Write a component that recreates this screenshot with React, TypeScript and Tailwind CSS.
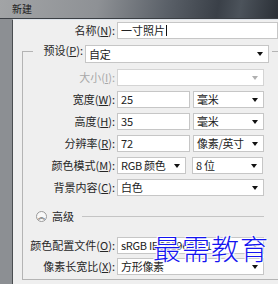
import type { ReactNode } from 'react';

const FONT = "font-['Noto_Sans_CJK_SC','Noto_Sans',sans-serif]";
const BOX = 'h-[17px] bg-white border border-[#c6c6c6] flex items-center text-[11px] text-[#222] leading-none';

function Arrow({ gray }: { gray?: boolean }) {
  return (
    <svg width="6" height="4" viewBox="0 0 6 4" className="shrink-0">
      <polygon points="0,0 6,0 3,4" fill={gray ? '#b0b0b0' : '#111'} />
    </svg>
  );
}

function Select({ value, w, disabled }: { value?: string; w: string; disabled?: boolean }) {
  return (
    <div className={`${BOX} ${w} pl-[3px] pr-[5px] justify-between gap-[2px] ${disabled ? 'bg-[#f3f3f3] border-[#d4d4d4]' : ''}`}>
      <span className="whitespace-nowrap tracking-[-0.3px]">{value}</span>
      <Arrow gray={disabled} />
    </div>
  );
}

function Field({ value, w }: { value: string; w: string }) {
  return <div className={`${BOX} ${w} pl-[3px]`}>{value}</div>;
}

function Label({ text, k, w = 'w-[92px]', dim }: { text: string; k: string; w?: string; dim?: boolean }) {
  return (
    <span className={`${w} shrink-0 text-right text-[11px] leading-none whitespace-nowrap ${dim ? 'text-[#a8a8a8]' : 'text-[#262626]'}`}>
      {text}(<span className="underline underline-offset-1">{k}</span>):
    </span>
  );
}

function Row({ children, mt = 'mt-[5px]' }: { children: ReactNode; mt?: string }) {
  return <div className={`flex items-center gap-[2px] h-[17px] ${mt}`}>{children}</div>;
}

export default function App() {
  return (
    <div className={`${FONT} relative w-[278px] h-[284px] overflow-hidden bg-[#8c8f93]`}>
      {/* title bar */}
      <div className="h-[19px] flex items-center pl-[12px] bg-[linear-gradient(100deg,#a2a4a6_0%,#8e9195_35%,#5a6068_60%,#3a4048_78%,#4c535b_86%,#2a2f36_100%)] border-b border-[#3b3f44]">
        <span className="text-[10px] text-[#1c1c1c] leading-none">新建</span>
      </div>

      {/* body */}
      <div className="ml-[12px] h-[265px] border-l border-[#4a4d50] bg-[#efefef] border-t border-t-[#dfe5ec]">
        <Row mt="mt-[2px]">
          <Label text="名称" k="N" w="w-[102px]" />
          <div className={`${BOX} w-[170px] pl-[3px] border-[#86acd8]`}>
            一寸照片<span className="inline-block w-px h-[11px] bg-[#111] ml-px" />
          </div>
        </Row>

        {/* preset row sits on the group border */}
        <div className="flex items-start gap-[2px] h-[18px] mt-[6px] ml-[9px]">
          <div className="w-[11px] mt-[6px] border-t border-[#b4b4b4]" />
          <Label text="预设" k="P" w="w-[48px]" />
          <Select value="自定" w="w-[184px] h-[18px]" />
          <div className="flex-1 ml-[1px] mt-[6px] border-t border-[#b4b4b4]" />
        </div>

        <div className="ml-[9px] -mt-[12px] pt-[12px] border-l border-b border-[#b4b4b4] pb-[4px]">
          <Row mt="mt-[6px]">
            <Label text="大小" k="I" dim />
            <Select w="w-[147px]" disabled />
          </Row>
          <Row>
            <Label text="宽度" k="W" />
            <Field value="25" w="w-[73px]" />
            <Select value="毫米" w="w-[71px] ml-[1px]" />
          </Row>
          <Row>
            <Label text="高度" k="H" />
            <Field value="35" w="w-[73px]" />
            <Select value="毫米" w="w-[71px] ml-[1px]" />
          </Row>
          <Row>
            <Label text="分辨率" k="R" />
            <Field value="72" w="w-[73px]" />
            <Select value="像素/英寸" w="w-[71px] ml-[1px]" />
          </Row>
          <Row>
            <Label text="颜色模式" k="M" />
            <Select value="RGB 颜色" w="w-[69px]" />
            <Select value="8 位" w="w-[71px] ml-[4px]" />
          </Row>
          <Row>
            <Label text="背景内容" k="C" />
            <Select value="白色" w="w-[147px]" />
          </Row>

          <div className="flex items-center h-[12px] mt-[14px] pl-[13px]">
            <span className="w-[11px] h-[11px] rounded-full border border-[#9a9a9a] bg-[#f8f8f8] flex items-center justify-center text-[7px] text-[#444] leading-none">︽</span>
            <span className="ml-[5px] text-[11px] text-[#262626] leading-none">高级</span>
            <div className="ml-[8px] w-[182px] border-t border-[#c4c4c4]" />
          </div>

          <Row mt="mt-[15px]">
            <Label text="颜色配置文件" k="O" />
            <Select value="sRGB IEC61966-2.1" w="w-[147px]" />
          </Row>
          <Row mt="mt-[4px]">
            <Label text="像素长宽比" k="X" />
            <Select value="方形像素" w="w-[147px]" />
          </Row>
        </div>
      </div>

      {/* watermark */}
      <div className="absolute left-[153px] top-[234px] text-[28px] leading-none tracking-[1px] text-[#1414f0] font-light [text-shadow:0_0_2px_#fff,0_0_2px_#fff,1px_1px_1px_#fff,-1px_-1px_1px_#fff]">
        最需教育
      </div>
    </div>
  );
}
